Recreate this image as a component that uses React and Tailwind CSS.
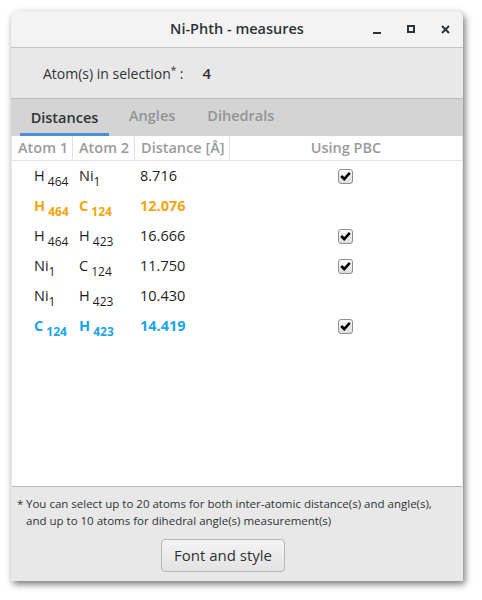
import React from 'react';

const rows = [
  { a: ['H', ' 464'], b: ['Ni', '1'], d: '8.716', pbc: true, tone: 'plain' },
  { a: ['H', ' 464'], b: ['C', ' 124'], d: '12.076', pbc: false, tone: 'orange' },
  { a: ['H', ' 464'], b: ['H', ' 423'], d: '16.666', pbc: true, tone: 'plain' },
  { a: ['Ni', '1'], b: ['C', ' 124'], d: '11.750', pbc: true, tone: 'plain' },
  { a: ['Ni', '1'], b: ['H', ' 423'], d: '10.430', pbc: false, tone: 'plain' },
  { a: ['C', ' 124'], b: ['H', ' 423'], d: '14.419', pbc: true, tone: 'blue' },
];

const toneClass = {
  plain: 'text-[#1e1e1e]',
  orange: 'text-[#f5a50f] font-bold',
  blue: 'text-[#1aa5ea] font-bold',
};

function Atom({ atom }) {
  return (
    <span className="whitespace-pre">
      {atom[0]}
      <sub className="text-[12px] relative top-[5px]">{atom[1]}</sub>
    </span>
  );
}

function Check() {
  return (
    <span className="w-[15px] h-[15px] rounded-[3px] border border-[#8f8f8f] bg-gradient-to-b from-[#fafafa] to-[#dedede] flex items-center justify-center">
      <svg width="11" height="10" viewBox="0 0 11 10">
        <path d="M1.2 5 L4.2 8 L9.8 1.8" fill="none" stroke="#000" strokeWidth="2.6" />
      </svg>
    </span>
  );
}

export default function App() {
  return (
    <div className="w-[482px] h-[600px] bg-white pt-[11px] pl-[11px]" style={{ fontFamily: '"Open Sans", "Noto Sans", sans-serif' }}>
      <div className="w-[452px] h-[570px] flex flex-col rounded-t-[7px] bg-[#e8e8e8] shadow-[2px_3px_7px_rgba(0,0,0,0.55)] overflow-hidden">
        {/* barra de título */}
        <div className="h-[37px] shrink-0 bg-[#f3f3f3] border-b border-[#c4c4c4] flex items-center relative">
          <div className="flex-1 text-center text-[14.5px] font-semibold text-[#2e3436]">Ni-Phth - measures</div>
          <div className="absolute right-0 top-0 h-full flex items-center">
            <span className="w-[34px] flex justify-center"><span className="mt-[7px] w-[8px] h-[2px] bg-[#2e3436]" /></span>
            <span className="w-[34px] flex justify-center"><span className="w-[8px] h-[8px] border-2 border-[#2e3436]" /></span>
            <span className="w-[34px] flex justify-center mr-[1px]">
              <svg width="9" height="9" viewBox="0 0 9 9"><path d="M1 1 L8 8 M8 1 L1 8" stroke="#2e3436" strokeWidth="2" /></svg>
            </span>
          </div>
        </div>

        <div className="h-[50px] shrink-0 flex items-center pl-[32px] text-[14px] text-[#2e3436]">
          <span>Atom(s) in selection<sup className="text-[10px] -top-[5px]">*</sup> :</span>
          <span className="ml-[19px] font-semibold text-[15px]">4</span>
        </div>

        {/* pestañas */}
        <div className="h-[38px] shrink-0 bg-[#d4d4d4] border-t border-[#bdbdbd] flex items-end pl-[9px] text-[14.5px] font-semibold">
          <div className="w-[89px] h-full flex items-center justify-center text-[#2e3436] border-b-[3px] border-[#4a90d9] pt-[3px]">Distances</div>
          <div className="ml-[20px] h-full flex items-center text-[#929595] pb-[3px]">Angles</div>
          <div className="ml-[32px] h-full flex items-center text-[#929595] pb-[3px]">Dihedrals</div>
        </div>

        <div className="h-[351px] shrink-0 bg-white border-b border-[#b8b8b8] ml-[1px] mr-[1px]">
          <div className="h-[25px] flex text-[14.5px] font-semibold text-[#9a9c9c] border-b border-[#e2e2e2]">
            <div className="w-[61px] pl-[6px] flex items-center border-r border-[#e2e2e2]">Atom 1</div>
            <div className="w-[62px] pl-[6px] flex items-center border-r border-[#e2e2e2]">Atom 2</div>
            <div className="w-[95px] pl-[6px] flex items-center border-r border-[#e2e2e2]">Distance [Å]</div>
            <div className="flex-1 flex items-center justify-center">Using PBC</div>
          </div>
          {rows.map((r, i) => (
            <div key={i} className={`h-[30px] flex items-center text-[14.5px] ${toneClass[r.tone]}`}>
              <div className="w-[61px] pl-[22px]"><Atom atom={r.a} /></div>
              <div className="w-[62px] pl-[6px]"><Atom atom={r.b} /></div>
              <div className="w-[95px] pl-[5px]">{r.d}</div>
              <div className="flex-1 flex justify-center pr-[2px]">{r.pbc && <Check />}</div>
            </div>
          ))}
        </div>

        <div className="flex-1 flex flex-col">
          <div className="pl-[6px] pt-[8px] text-[11.5px] leading-[17px] text-[#2e3436] flex">
            <span className="w-[9px]">*</span>
            <span>You can select up to 20 atoms for both inter-atomic distance(s) and angle(s),<br />and up to 10 atoms for dihedral angle(s) measurement(s)</span>
          </div>
          <div className="flex mt-[10px] pl-[150px]">
            <button className="w-[124px] h-[33px] rounded-[4px] border border-[#b6b6b6] bg-gradient-to-b from-[#f4f4f4] to-[#e3e3e3] text-[15px] text-[#2e3436]">Font and style</button>
          </div>
        </div>
      </div>
    </div>
  );
}
